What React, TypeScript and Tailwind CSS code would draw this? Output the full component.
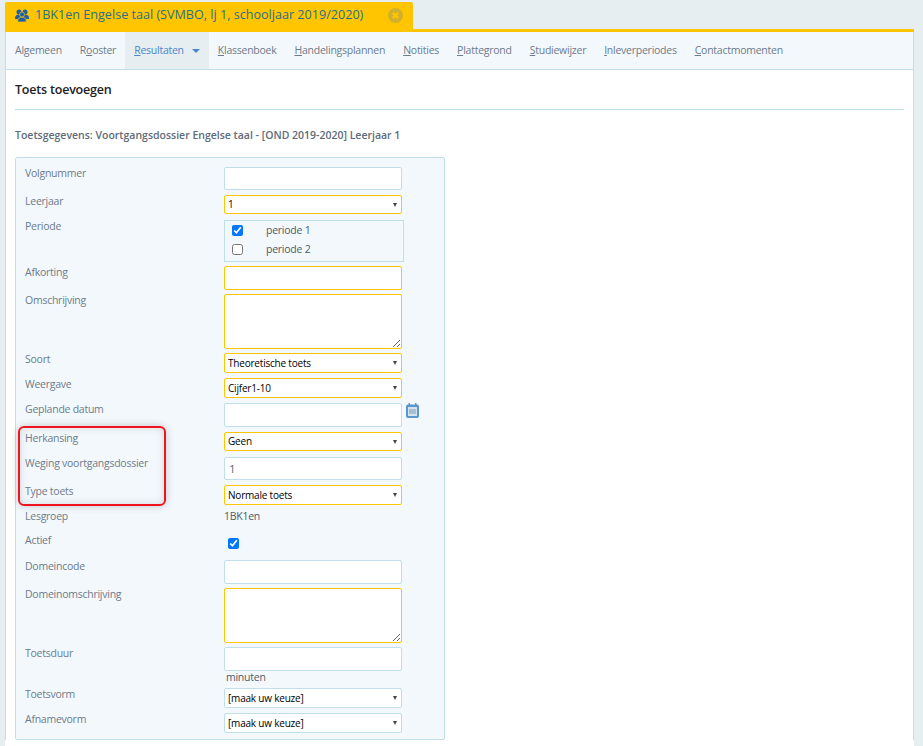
const tabs = [
  { label: 'Algemeen', key: '' },
  { label: 'Rooster', key: 'o' },
  { label: 'Resultaten', key: 'R', active: true },
  { label: 'Klassenboek', key: 'K' },
  { label: 'Handelingsplannen', key: 'H' },
  { label: 'Notities', key: 'N' },
  { label: 'Plattegrond', key: 'P' },
  { label: 'Studiewijzer', key: 'S' },
  { label: 'Inleverperiodes', key: 'I' },
  { label: 'Contactmomenten', key: 'C' },
];

const yellow = 'border-[#ffc500]';
const blue = 'border-[#c0dfeb]';

function NavLabel({ label, hotkey }: { label: string; hotkey: string }) {
  const i = hotkey ? label.indexOf(hotkey) : -1;
  if (i < 0) return <>{label}</>;
  return (
    <>
      {label.slice(0, i)}
      <span className="underline">{label[i]}</span>
      {label.slice(i + 1)}
    </>
  );
}

function Row({ label, className, children }: { label: string; className: string; children: React.ReactNode }) {
  return (
    <div className={`flex ${className}`}>
      <label className="w-[199px] shrink-0 text-[10.5px] leading-[12px] tracking-[-0.25px] text-[#6d7b8a]">{label}</label>
      <div className="w-[200px]">{children}</div>
    </div>
  );
}

function TextInput({ border, height, value }: { border: string; height: string; value?: string }) {
  return (
    <input
      type="text"
      defaultValue={value}
      className={`block w-[178px] shrink-0 rounded-[2px] border bg-white px-[4px] text-[11.5px] text-[#5a6a78] ${border} ${height}`}
    />
  );
}

function Select({ value, border, height = 'h-[20px]' }: { value: string; border: string; height?: string }) {
  return (
    <div className="relative w-[178px]">
      <select
        defaultValue={value}
        className={`block w-[178px] appearance-none rounded-[2px] border bg-white pl-[3px] text-[10px] tracking-[-0.2px] text-black ${border} ${height}`}
      >
        <option>{value}</option>
      </select>
      <span className="pointer-events-none absolute right-[5px] top-1/2 -mt-[2px] h-0 w-0 border-x-[2.5px] border-t-[4px] border-x-transparent border-t-[#444]" />
    </div>
  );
}

function UsersIcon() {
  return (
    <svg viewBox="0 0 14 13" className="h-[13px] w-[14px] shrink-0">
      <circle cx="4" cy="3" r="2.5" fill="#1f5ea8" />
      <circle cx="10" cy="3" r="2.5" fill="#1f5ea8" />
      <path fill="#1f5ea8" d="M0 9c0-2 1.5-3.500 4-3.500h6c2.500 0 4 1.500 4 3.500v1H0z" />
      <circle cx="7" cy="5.500" r="2.500" fill="#1f5ea8" stroke="#ffc500" strokeWidth="0.7" />
      <path fill="#1f5ea8" stroke="#ffc500" strokeWidth="0.7" d="M2.800 13v-1.500c0-2 1.500-3.200 4.200-3.200s4.200 1.200 4.200 3.200V13z" />
    </svg>
  );
}

function CloseIcon() {
  return (
    <svg viewBox="0 0 15 15" className="ml-auto mr-[10px] h-[15px] w-[15px] shrink-0">
      <circle cx="7.500" cy="7.500" r="7.500" fill="#d0b12c" />
      <path stroke="#ffc500" strokeWidth="2.400" d="M4.800 4.800l5.400 5.400M10.200 4.800l-5.400 5.400" />
    </svg>
  );
}

function CalendarIcon() {
  return (
    <svg viewBox="0 0 13 15" className="ml-[4px] h-[15px] w-[13px] shrink-0">
      <rect y="1.500" width="13" height="13.500" rx="2" fill="#5a96cf" />
      <rect x="2.500" width="1.500" height="3" fill="#5a96cf" />
      <rect x="9" width="1.500" height="3" fill="#5a96cf" />
      <rect x="2" y="4" width="9" height="9" fill="#d5e3ef" />
      <rect x="3" y="6" width="7" height="5" fill="#a6bdd3" />
    </svg>
  );
}

export default function App() {
  return (
    <div className="relative h-[746px] w-[923px] overflow-hidden bg-[#e6eef2] font-['Open_Sans',sans-serif]">
      <div className="pl-[5px] pt-[2px]">
        <div className="flex h-[27px] w-[408px] items-center rounded-t-[2px] bg-[#ffc500] pl-[10px] text-[#2a6f8e]">
          <UsersIcon />
          <span className="ml-[6px] text-[12.6px]">1BK1en Engelse taal (SVMBO, lj 1, schooljaar 2019/2020)</span>
          <CloseIcon />
        </div>
      </div>
      <div className="ml-[5px] h-[717px] w-[909px] border-t-[3px] border-[#ffc500] bg-white">
        <nav className="flex h-[38px] items-stretch border border-t-0 border-[#c0dfeb] bg-[#f3f8fd] text-[10.5px] tracking-[-0.25px] text-[#6d7b8a]">
          {tabs.map((t) => (
            <a
              key={t.label}
              className={`flex items-center px-[9px] ${t.active ? 'bg-[#e6eef2] text-[#4a86c8]' : ''}`}
            >
              <NavLabel label={t.label} hotkey={t.key} />
              {t.active && <span className="ml-[8px] mt-[1px] h-0 w-0 border-x-[4px] border-t-[4px] border-x-transparent border-t-[#4a86c8]" />}
            </a>
          ))}
        </nav>
        <div className="border-x border-[#c0dfeb] px-[9px]">
          <h1 className="pt-[12px] text-[12.5px] font-semibold leading-[16px] tracking-[-0.2px] text-[#222]">Toets toevoegen</h1>
          <hr className="mt-[11px] border-[#c0dfeb]" />
          <h2 className="mt-[18px] text-[10.5px] font-semibold leading-[14px] text-[#5e6b78]">
            Toetsgegevens: Voortgangsdossier Engelse taal - [OND 2019-2020] Leerjaar 1
          </h2>
          <div className="mt-[15px] h-[583px] w-[430px] rounded-[2px] border border-[#c0dfeb] bg-[#f3f8fd] pl-[9px] pt-[9px]">
            <Row label="Volgnummer" className="mb-[5px]"><TextInput border={blue} height="h-[23px]" /></Row>
            <Row label="Leerjaar" className="mb-[6px]"><Select value="1" border={yellow} height="h-[19px]" /></Row>
            <Row label="Periode" className="mb-[4px]">
              <div className="h-[42px] w-[180px] border border-[#c0dfeb] pl-[7px] text-[10.5px] tracking-[-0.25px] text-[#4f5b66]">
                <div className="flex h-[19px] items-center">
                  <input type="checkbox" defaultChecked className="h-[11px] w-[11px]" />
                  <span className="ml-[23px]">periode 1</span>
                </div>
                <div className="flex h-[19px] items-center">
                  <input type="checkbox" className="h-[11px] w-[11px]" />
                  <span className="ml-[23px] mt-[1px]">periode 2</span>
                </div>
              </div>
            </Row>
            <Row label="Afkorting" className="mb-[4px]"><TextInput border={yellow} height="h-[24px]" /></Row>
            <Row label="Omschrijving" className="mb-[4px]">
              <textarea className={`block h-[55px] w-[178px] rounded-[2px] border bg-white ${yellow}`} />
            </Row>
            <Row label="Soort" className="mb-[5px]"><Select value="Theoretische toets" border={yellow} /></Row>
            <Row label="Weergave" className="mb-[5px]"><Select value="Cijfer1-10" border={yellow} /></Row>
            <Row label="Geplande datum" className="mb-[5px]">
              <div className="flex">
                <TextInput border={blue} height="h-[24px]" />
                <CalendarIcon />
              </div>
            </Row>
            <Row label="Herkansing" className="mb-[6px]"><Select value="Geen" border={yellow} height="h-[19px]" /></Row>
            <Row label="Weging voortgangsdossier" className="mb-[5px]"><TextInput border={blue} height="h-[23px]" value="1" /></Row>
            <Row label="Type toets" className="mb-[5px]"><Select value="Normale toets" border={yellow} /></Row>
            <Row label="Lesgroep" className="mb-[11px]"><span className="block text-[10.5px] leading-[13px] tracking-[-0.25px] text-[#4f5b66]">1BK1en</span></Row>
            <Row label="Actief" className="mb-[11px]">
              <input type="checkbox" defaultChecked className="ml-[4px] mt-[4px] block h-[11px] w-[11px]" />
            </Row>
            <Row label="Domeincode" className="mb-[4px]"><TextInput border={blue} height="h-[24px]" /></Row>
            <Row label="Domeinomschrijving" className="mb-[4px]">
              <textarea className={`block h-[55px] w-[178px] rounded-[2px] border bg-white ${yellow}`} />
            </Row>
            <Row label="Toetsduur" className="mb-[4px]">
              <TextInput border={blue} height="h-[24px]" />
              <span className="ml-[2px] block text-[10.5px] leading-[13px] tracking-[-0.25px] text-[#4f5b66]">minuten</span>
            </Row>
            <Row label="Toetsvorm" className="mb-[5px]"><Select value="[maak uw keuze]" border={blue} /></Row>
            <Row label="Afnamevorm" className=""><Select value="[maak uw keuze]" border={blue} /></Row>
          </div>
        </div>
      </div>
      {/* annotation over the screenshot */}
      <div className="absolute left-[18px] top-[426px] h-[80px] w-[148px] rounded-[6px] border-2 border-[#f0141e] shadow-[0_0_8px_rgba(0,0,0,0.2),inset_0_0_8px_rgba(0,0,0,0.12)]" />
    </div>
  );
}
